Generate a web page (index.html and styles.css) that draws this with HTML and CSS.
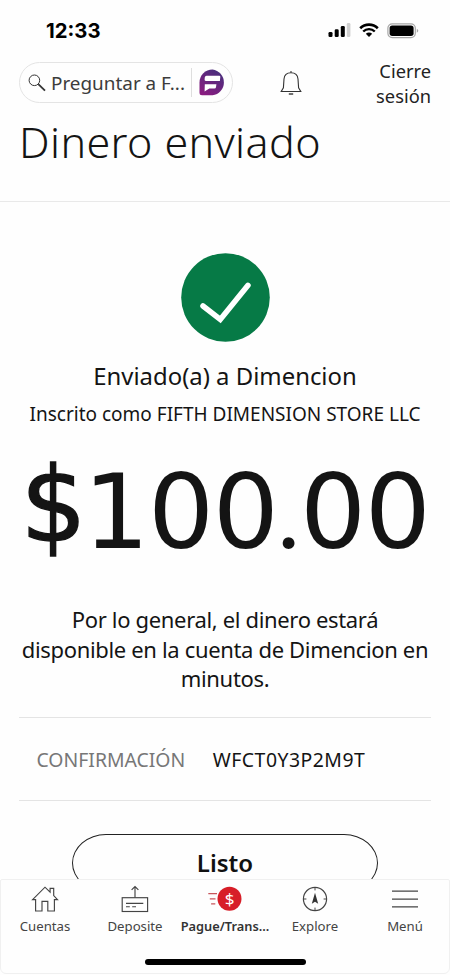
FILE: index.html
```html
<!DOCTYPE html>
<html lang="es">
<head>
<meta charset="utf-8">
<meta name="viewport" content="width=device-width, initial-scale=1">
<title>Dinero enviado</title>
<link rel="stylesheet" href="styles.css">
</head>
<body>
<div class="screen">
  <div class="status">
    <span class="clock">12:33</span>
    <div class="status-icons">
      <svg width="23" height="16" viewBox="0 0 23 16"><rect x="0.5" y="9" width="4" height="5" rx="1.3"/><rect x="6.7" y="6.2" width="4" height="7.8" rx="1.3"/><rect x="12.8" y="3" width="4" height="11" rx="1.3"/><rect x="18.8" y="0" width="3.6" height="14" rx="1.3" fill="#d0d0d0"/></svg>
      <svg width="20" height="16" viewBox="0 0 20 16" fill="none" stroke="#000"><path d="M1.2 5.2A12.6 12.6 0 0 1 18.8 5.2" stroke-width="2.6"/><path d="M4.2 8.5A8.3 8.3 0 0 1 15.8 8.5" stroke-width="2.4"/><path d="M6.8 10.8Q10 8.4 13.2 10.8L10 14z" fill="#000" stroke="none"/></svg>
      <svg width="33" height="16" viewBox="0 0 33 16"><rect x="0.9" y="0.8" width="27.4" height="13.8" rx="4.3" fill="#fff" stroke="#a6a6a6" stroke-width="1.2"/><rect x="2.6" y="2.5" width="24" height="10.4" rx="2.6"/><path d="M29.8 5.7q3 2 0 4z" fill="#a6a6a6"/></svg>
    </div>
  </div>
  <header class="topbar">
    <div class="search">
      <svg class="lens" width="18" height="18" viewBox="0 0 18 18" fill="none" stroke="#333"><circle cx="6.4" cy="6.3" r="5.3" stroke-width="1"/><path d="M10.3 10.2L17 16.7" stroke-width="1.8"/></svg>
      <span class="search-text">Preguntar a F...</span>
      <span class="search-line"></span>
      <svg width="27" height="27" viewBox="0 0 27 27"><defs><linearGradient id="g" x1="0.8" y1="0" x2="0.2" y2="1"><stop offset="0" stop-color="#46307c"/><stop offset="1" stop-color="#8a1b80"/></linearGradient></defs><path d="M13.5 0.5A13 13 0 0 1 13.5 26.3H3Q0.5 26.3 0.5 23.8V13.4A13 13 0 0 1 13.5 0.5z" fill="url(#g)"/><path d="M7.6 6.7H20.3Q21.5 6.7 21.3 8L20.9 11.9H6.8Q5.4 11.9 5.6 10.5L5.8 8.3Q6 6.7 7.6 6.7zM5.8 15.2H17.4L17 18.2Q16.8 19.6 15.4 19.6H10.3L5.6 22.6z" fill="#fff"/></svg>
    </div>
    <svg class="bell" width="22" height="26" viewBox="0 0 22 26" fill="none" stroke="#333" stroke-width="1.1"><path d="M11 1V2.7M1.2 21.5H20.8L18.6 17.8 18 9C17.7 4.8 14.7 2.7 11 2.7S4.3 4.8 4 9L3.4 17.8z"/><path d="M8.8 24H13.2" stroke-width="1.4"/></svg>
    <a class="logout">Cierre<br>sesión</a>
  </header>
  <h1 class="title">Dinero enviado</h1>
  <main class="content">
    <svg class="check" width="89" height="89" viewBox="0 0 89 89"><circle cx="44.5" cy="44.5" r="44.3" fill="#067a46"/><path d="M22 53L39.3 66.5 67 32.3" fill="none" stroke="#fff" stroke-width="5.5" stroke-linecap="round"/></svg>
    <p class="sent">Enviado(a) a Dimencion</p>
    <p class="enrolled">Inscrito como FIFTH DIMENSION STORE LLC</p>
    <p class="amount"><span class="currency">$</span>100<span class="point">.</span>00</p>
    <p class="note">Por lo general, el dinero estará<br>disponible en la cuenta de Dimencion en<br>minutos.</p>
    <div class="confirm"><span class="confirm-label">CONFIRMACIÓN</span><span class="confirm-code">WFCT0Y3P2M9T</span></div>
    <button class="done">Listo</button>
  </main>
  <nav class="tabs">
    <div class="tab-row">
      <a class="tab"><svg width="28" height="28" viewBox="0 0 28 28" fill="none" stroke="#444" stroke-width="1.15"><path d="M4.6 26V14.6H1.6L14 2.2 19.1 7.2V3.4H22.7V10.6L26.5 14.6H23.4V26H16.8V16.3H11V26z"/></svg><span>Cuentas</span></a>
      <a class="tab"><svg width="28" height="28" viewBox="0 0 28 28" fill="none" stroke="#444" stroke-width="1.15"><rect x="1.2" y="12.7" width="25.4" height="13.8"/><path d="M14 12.5V1.5M10.6 4.9L14 1.5 17.4 4.9M5 18.3H22.3M5 21.7H8.8M11.2 21.7H15"/></svg><span>Deposite</span></a>
      <a class="tab active"><svg width="34" height="28" viewBox="0 0 34 28"><circle cx="21.5" cy="13.8" r="12" fill="#d71e28"/><path d="M0.3 8.6H9M1.8 13.8H7.5M3.1 18.8H7.3" stroke="#c8565c" stroke-width="1.3"/><text class="dollar" x="21.5" y="20">$</text></svg><span>Pague/Trans...</span></a>
      <a class="tab"><svg width="28" height="28" viewBox="0 0 28 28"><circle cx="14" cy="14" r="11.6" fill="none" stroke="#444" stroke-width="1.2"/><path d="M14 2.5V5.4M14 22.6V25.5M2.5 14H5.4M22.6 14H25.5" stroke="#444"/><path d="M14 7.8L17.2 18.8 14 16.7 10.8 18.8z" fill="#333"/></svg><span>Explore</span></a>
      <a class="tab"><svg width="28" height="28" viewBox="0 0 28 28" stroke="#444" stroke-width="1.3"><path d="M1 6.2H27M1 14.2H27M1 21.9H27"/></svg><span>Menú</span></a>
    </div>
    <div class="home-indicator"></div>
  </nav>
</div>
</body>
</html>
```
FILE: styles.css
```css
* { box-sizing: border-box; }
body { margin: 0; background: #fefefe; color: #141414; font-family: "Noto Sans", sans-serif; }
p, h1 { margin: 0; }
svg { display: block; flex: none; }

.screen { position: relative; width: 450px; height: 975px; overflow: hidden; background: #fefefe; }

.status { display: flex; justify-content: space-between; align-items: center; height: 58px; padding: 4px 30px 0 46px; }
.clock { font: 700 20.3px/24px Inter, sans-serif; color: #000; }
.status-icons { display: flex; gap: 8px; }

.topbar { display: flex; height: 57px; padding-right: 19px; padding-left: 19px; }
.search { display: flex; align-items: center; width: 214px; height: 41px; margin-top: 4px; padding-left: 8px; border: 1px solid #e4e4e4; border-radius: 21px; }
.search-text { width: 140px; margin-left: 5px; color: #3c3c3c; font-size: 18.9px; line-height: 26px; white-space: nowrap; }
.search-line { width: 1px; height: 29px; margin-right: 7px; background: #dedede; }
.bell { margin: 12px 0 0 47px; }
.logout { margin-left: auto; font-size: 18.3px; line-height: 25px; text-align: right; color: #222; }

.title { height: 87px; padding-left: 19px; border-bottom: 1px solid #e9e9e9; font-size: 43px; font-weight: 300; line-height: 53px; letter-spacing: 0.4px; white-space: nowrap; }

.content { display: flex; flex-direction: column; align-items: center; padding: 51px 19px 0; }
.sent { margin-top: 19px; font-size: 23.9px; line-height: 30px; }
.enrolled { margin-top: 11px; font-size: 19px; line-height: 24px; white-space: nowrap; }
.amount { height: 110px; margin-top: 31px; font-family: "DejaVu Sans", sans-serif; font-size: 104px; line-height: 110px; letter-spacing: -1.4px; white-space: nowrap; }
.currency { display: inline-block; margin-right: -2px; vertical-align: 7px; line-height: 94px; -webkit-text-stroke: 1.4px #141414; }
.point { display: inline-block; width: 22.5px; font-family: Lato, sans-serif; font-size: 94px; line-height: 90px; }
.note { margin-top: 38px; font-size: 22px; line-height: 29.6px; letter-spacing: -0.34px; text-align: center; white-space: nowrap; }
.confirm { display: flex; align-items: center; align-self: stretch; gap: 27.5px; height: 84px; margin-top: 23px; padding: 2px 0 0 17.5px; border: solid #e4e4e4; border-width: 1px 0; font-size: 19.4px; }
.confirm-label { color: #777; }
.confirm-code { letter-spacing: 0.5px; }
.done { width: 306px; height: 58px; margin-top: 33px; padding: 0; border: 1.3px solid #222; border-radius: 34px / 29px; background: transparent; color: #111; font: 600 24px/30px "Noto Sans", sans-serif; }

.tabs { position: absolute; left: 0; right: 0; bottom: 1px; display: flex; flex-direction: column; align-items: center; height: 95px; padding-top: 5px; border: 1px solid #f0f0f0; border-radius: 2px 2px 6px 6px; background: #fefefe; }
.tab-row { display: flex; }
.tab { display: flex; flex-direction: column; align-items: center; width: 90px; font-size: 13.2px; line-height: 18px; color: #444; }
.tab span { margin-top: 4px; white-space: nowrap; }
.active { font-size: 12.8px; font-weight: 600; color: #333; }
.dollar { fill: #fff; font-size: 17px; font-weight: 400; text-anchor: middle; }
.home-indicator { width: 161px; height: 6px; margin-top: 24px; border-radius: 3px; background: #000; }
```
